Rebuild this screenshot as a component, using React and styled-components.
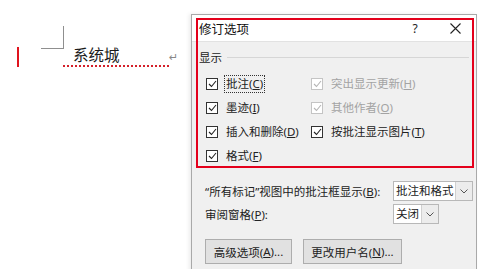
import React from "react";
import styled, { createGlobalStyle } from "styled-components";

const Global = createGlobalStyle`
  html, body { margin: 0; padding: 0; background: #fff; }
  body { font-family: "Noto Sans", "Noto Sans CJK SC", sans-serif; }
`;

const FONT = `"Noto Sans", "Noto Sans CJK SC", sans-serif`;

const Screen = styled.div`
  width: 480px;
  height: 269px;
  overflow: hidden;
  display: flex;
  background: #fff;
`;

const Doc = styled.div`
  width: 191px;
  flex: none;
  padding-top: 26px;
  box-sizing: border-box;
  display: flex;
  flex-direction: column;
  align-items: flex-start;
`;

const CornerMark = styled.div`
  display: flex;
  margin-left: 41px;
  width: 23px;
  height: 23px;
  flex: none;
  box-sizing: border-box;
  border-bottom: 1px solid #8f8f8f;
  &::after {
    content: "";
    margin-left: auto;
    width: 1px;
    height: 100%;
    background: #8f8f8f;
  }
`;

const TextLine = styled.div`
  display: flex;
  align-items: flex-start;
  margin-top: -4px;
  height: 24px;
`;

const ChangeBar = styled.div`
  width: 2px;
  height: 20px;
  margin-left: 17px;
  margin-top: 2px;
  background: #e0141e;
`;

const Word = styled.div`
  margin-left: 44px;
  padding-left: 10px;
  width: 106px;
  height: 22px;
  font-family: "Noto Sans CJK SC", sans-serif;
  font-size: 15.5px;
  line-height: 18px;
  color: #1a1a1a;
  border-bottom: 2px dotted #d4202a;
  box-sizing: border-box;
`;

const Ret = styled.span`
  font-size: 11px;
  color: #888;
  margin-top: 6px;
  font-family: "DejaVu Sans", sans-serif;
`;

const Dialog = styled.div`
  position: relative;
  margin-top: 14px;
  width: 286px;
  height: 270px;
  flex: none;
  border: 1px solid #a9a9a9;
  background: #f0f0f0;
  box-sizing: border-box;
  box-shadow: -2px 0 4px rgba(0, 0, 0, 0.08);
  font-family: ${FONT};
  font-size: 11.5px;
  color: #222;
`;

const TitleBar = styled.div`
  height: 26px;
  background: #fff;
  display: flex;
  align-items: center;
  padding-left: 7px;
  border-bottom: 1px solid #e2e2e2;
`;

const Title = styled.div`
  flex: 1;
  font-family: "Noto Sans CJK SC", sans-serif;
  font-size: 12.5px;
  color: #111;
`;

const Help = styled.div`
  width: 14px;
  text-align: center;
  font-size: 12px;
  margin-right: 28px;
  color: #222;
`;

const Close = styled.div`
  width: 12px;
  margin-right: 14px;
  display: flex;
  align-items: center;
`;

const Highlight = styled.div`
  position: absolute;
  left: 4px;
  top: 3px;
  width: 278px;
  height: 150px;
  border: 2px solid #e4001b;
  box-sizing: border-box;
  pointer-events: none;
`;

const Section = styled.div`
  display: flex;
  align-items: center;
  margin: 7px 7px 0 7px;
  height: 16px;
  font-family: "Noto Sans CJK SC", sans-serif;
  &::after {
    content: "";
    flex: 1;
    height: 1px;
    background: #d6d6d6;
    margin-left: 5px;
  }
`;

const Grid = styled.div`
  display: grid;
  grid-template-columns: 105px 1fr;
  grid-auto-rows: 24px;
  margin: 7px 0 0 14px;
`;

const Check = styled.div`
  display: flex;
  align-items: center;
  gap: 6px;
  color: ${(p) => (p.$disabled ? "#a3a3a3" : "#222")};
  white-space: nowrap;
`;

const Box = styled.div`
  width: 12px;
  height: 12px;
  flex: none;
  box-sizing: border-box;
  border: 1px solid ${(p) => (p.$disabled ? "#c4c4c4" : "#333")};
  background: #fff;
  display: flex;
  align-items: center;
  justify-content: center;
`;

const Label = styled.span`
  padding: 1px 1px;
  border: 1px ${(p) => (p.$focus ? "dotted #333" : "solid transparent")};
  line-height: 14px;
`;

const FormRow = styled.div`
  display: flex;
  align-items: center;
  height: 20px;
  margin: ${(p) => p.$mt}px 0 0 13px;
`;

const FormLabel = styled.div`
  width: 188px;
  white-space: nowrap;
`;

const Select = styled.div`
  width: ${(p) => p.$w}px;
  height: 20px;
  display: flex;
  border: 1px solid #b8b8b8;
  box-sizing: border-box;
  background: #fff;
`;

const SelectText = styled.div`
  flex: 1;
  padding-left: 2px;
  line-height: 18px;
  white-space: nowrap;
  overflow: hidden;
`;

const Arrow = styled.div`
  width: 16px;
  border-left: 1px solid #d0d0d0;
  background: #ececec;
  display: flex;
  align-items: center;
  justify-content: center;
`;

const Buttons = styled.div`
  display: flex;
  gap: 11px;
  margin: 15px 0 0 13px;
`;

const Button = styled.div`
  width: ${(p) => p.$w}px;
  height: 25px;
  box-sizing: border-box;
  border: 1px solid #adadad;
  background: #e1e1e1;
  display: flex;
  align-items: center;
  justify-content: center;
  white-space: nowrap;
`;

const Tick = ({ disabled }) => (
  <svg width="9" height="8" viewBox="0 0 9 8">
    <path d="M1 4 L3.5 6.5 L8 1" fill="none" stroke={disabled ? "#b5b5b5" : "#222"} strokeWidth="1.1" />
  </svg>
);

const Chevron = () => (
  <svg width="8" height="5" viewBox="0 0 8 5">
    <path d="M0.5 0.5 L4 4 L7.5 0.5" fill="none" stroke="#555" strokeWidth="1" />
  </svg>
);

const CheckItem = ({ label, k, disabled, focus }) => (
  <Check $disabled={disabled}>
    <Box $disabled={disabled}>
      <Tick disabled={disabled} />
    </Box>
    <Label $focus={focus}>
      {label}(<u>{k}</u>)
    </Label>
  </Check>
);

export default function App() {
  return (
    <Screen>
      <Global />
      <Doc>
        <CornerMark />
        <TextLine>
          <ChangeBar />
          <Word>系统城</Word>
          <Ret>↵</Ret>
        </TextLine>
      </Doc>
      <Dialog>
        <TitleBar>
          <Title>修订选项</Title>
          <Help>?</Help>
          <Close>
            <svg width="11" height="11" viewBox="0 0 11 11">
              <path d="M0.5 0.5 L10.5 10.5 M10.5 0.5 L0.5 10.5" stroke="#222" strokeWidth="1.1" />
            </svg>
          </Close>
        </TitleBar>
        <Section>显示</Section>
        <Grid>
          <CheckItem label="批注" k="C" focus />
          <CheckItem label="突出显示更新" k="H" disabled />
          <CheckItem label="墨迹" k="I" />
          <CheckItem label="其他作者" k="O" disabled />
          <CheckItem label="插入和删除" k="D" />
          <CheckItem label="按批注显示图片" k="T" />
          <CheckItem label="格式" k="F" />
        </Grid>
        <FormRow $mt={13}>
          <FormLabel>
            “所有标记”视图中的批注框显示(<u>B</u>):
          </FormLabel>
          <Select $w={80}>
            <SelectText>批注和格式</SelectText>
            <Arrow>
              <Chevron />
            </Arrow>
          </Select>
        </FormRow>
        <FormRow $mt={3}>
          <FormLabel>
            审阅窗格(<u>P</u>):
          </FormLabel>
          <Select $w={46}>
            <SelectText>关闭</SelectText>
            <Arrow>
              <Chevron />
            </Arrow>
          </Select>
        </FormRow>
        <Buttons>
          <Button $w={87}>
            高级选项(<u>A</u>)...
          </Button>
          <Button $w={99}>
            更改用户名(<u>N</u>)...
          </Button>
        </Buttons>
        <Highlight />
      </Dialog>
    </Screen>
  );
}
